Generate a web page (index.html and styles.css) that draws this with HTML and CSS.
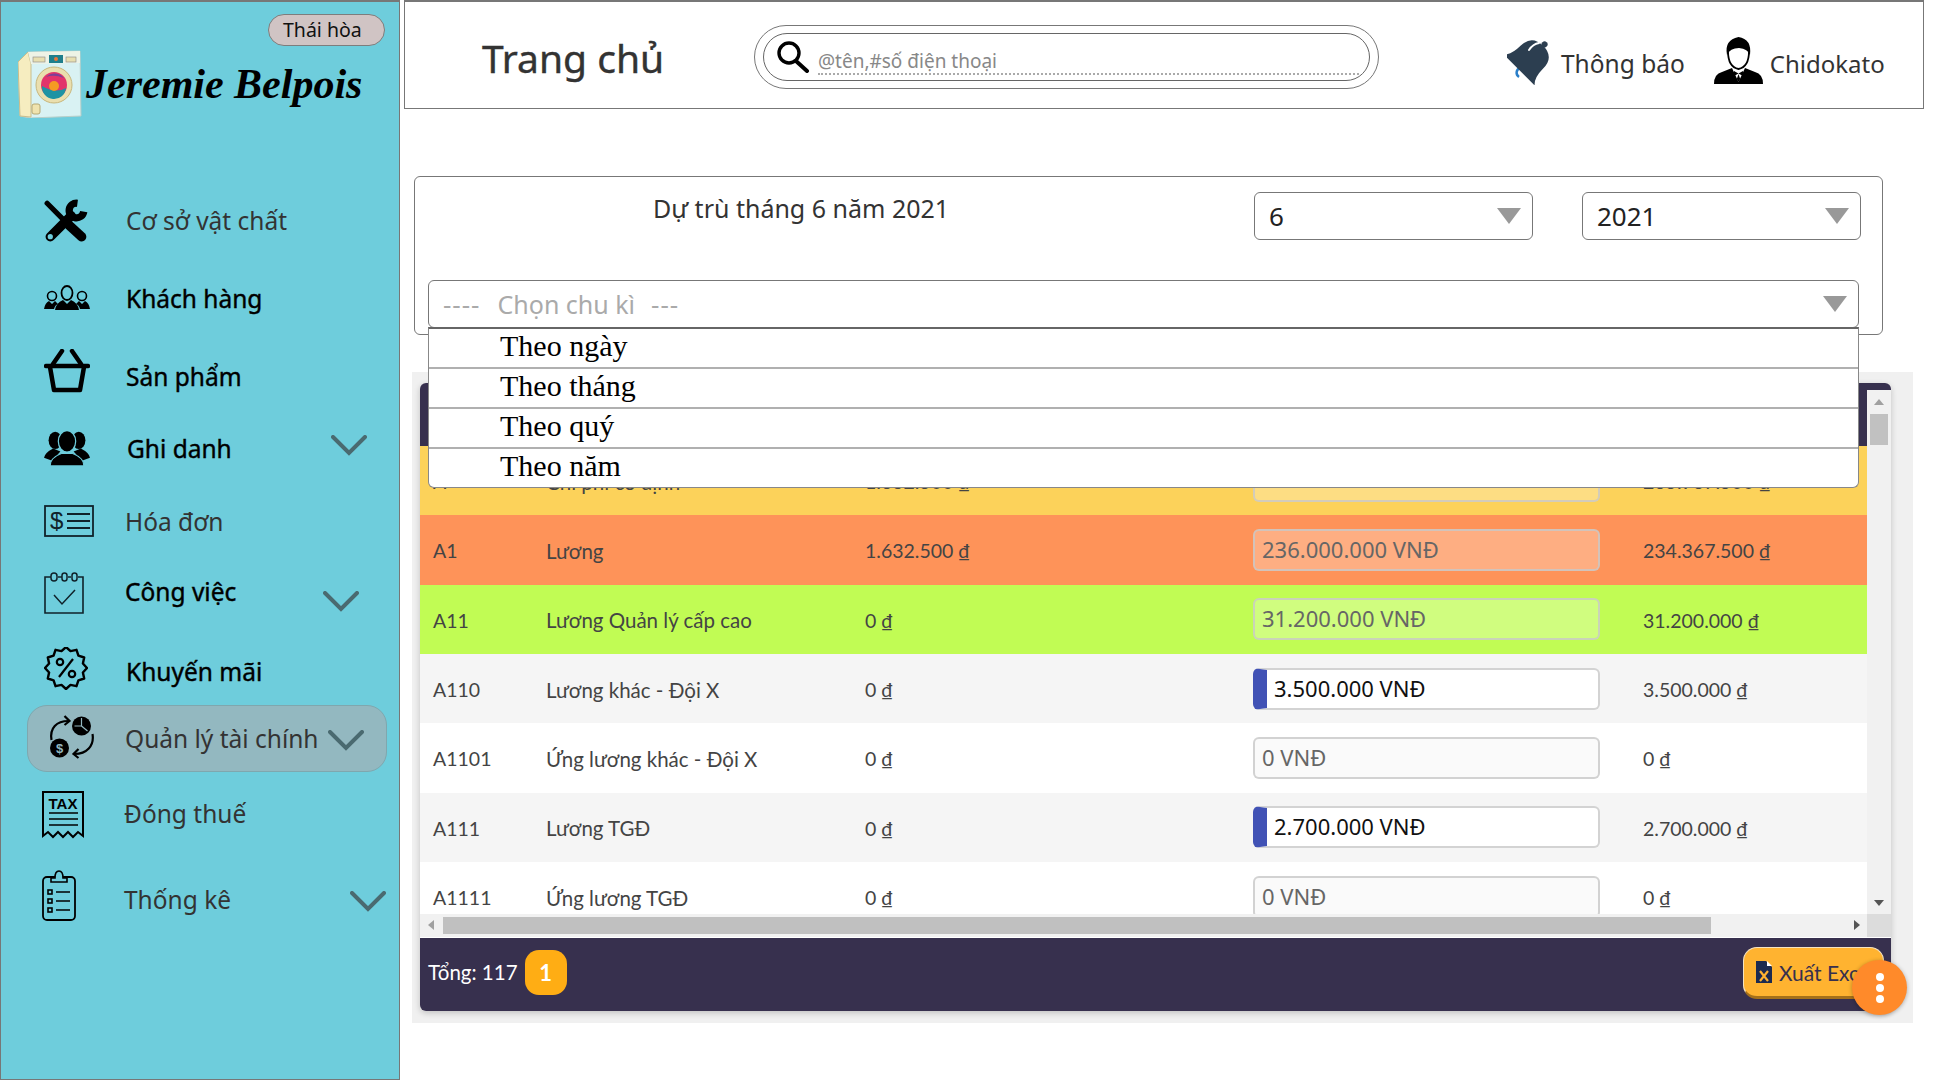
FILE: index.html
```html
<!DOCTYPE html>
<html lang="en">

<head>
    <meta charset="UTF-8">
    <meta name="viewport" content="width=device-width, initial-scale=1.0">
    <title>Trang chủ</title>
    <link rel="stylesheet" href="styles.css">
</head>

<body>
    <aside class="sidebar">
        <div class="branch-row">
            <span class="branch-pill">Thái hòa</span>
        </div>
        <div class="brand">
            <svg class="brand-logo" width="64" height="68" viewBox="0 0 64 68">
                <path d="M0 12 L10 2 L62 1 L63 66 L12 68 L2 66 Z" fill="#d9f2f3" stroke="#b9cfc9"/>
                <path d="M0 12 L10 2 L13 14 L13 67 L2 66 Z" fill="#f6edc0" stroke="#c9bd8c"/>
                <path d="M10 2 L62 1 L62 13 L13 14 Z" fill="#eef3e6"/>
                <rect x="15" y="7" width="12" height="5" fill="#e8dfb0" stroke="#888" stroke-width=".6"/>
                <rect x="31" y="5" width="14" height="8" fill="#1f7f8c"/>
                <circle cx="38" cy="9" r="2" fill="#e8773a"/>
                <rect x="48" y="7" width="10" height="5" fill="#e8dfb0" stroke="#888" stroke-width=".6"/>
                <circle cx="36" cy="35" r="18" fill="#eadfae" stroke="#c8b77d"/>
                <circle cx="36" cy="35" r="13" fill="#e2336b"/>
                <path d="M24 36 A12 12 0 0 0 48 38 Q38 44 24 36 Z" fill="#1d93a3"/>
                <path d="M28 27 A12 12 0 0 1 46 28 Q36 24 28 27 Z" fill="#7b3f98"/>
                <circle cx="36" cy="36" r="5" fill="#f59a23"/>
                <rect x="14" y="54" width="8" height="10" rx="2" fill="#efe3ae" stroke="#b6a873"/>
            </svg>
            <span class="brand-name">Jeremie Belpois</span>
        </div>
        <nav class="side-nav">
            <div class="nav-item">
                <span class="icon-box">
                    <svg width="46" height="46" viewBox="0 0 44 44">
                        <g fill="none" stroke="#000" stroke-linecap="round">
                            <path d="M3 6 L20 23" stroke-width="5"/>
                            <path d="M24 27 L36 38" stroke-width="9"/>
                            <path d="M6 38 L26 18" stroke-width="9"/>
                            <path d="M32 6 A7 7 0 1 0 38 14" stroke-width="7" stroke-linecap="butt"/>
                        </g>
                        <circle cx="6" cy="38" r="2.5" fill="#6ecddc"/>
                    </svg>
                </span>
                <span class="nav-label">Cơ sở vật chất</span>
            </div>
            <div class="nav-item">
                <span class="icon-box">
                    <svg width="46" height="26" viewBox="0 0 46 26">
                        <ellipse cx="23" cy="8" rx="5.5" ry="7" fill="none" stroke="#000" stroke-width="1.8"/>
                        <path d="M11 25 Q12 18 19 15 L23 19 L27 15 Q34 18 35 25 Z"/>
                        <circle cx="8" cy="11" r="4.5" fill="none" stroke="#000" stroke-width="1.6"/>
                        <circle cx="38" cy="11" r="4.5" fill="none" stroke="#000" stroke-width="1.6"/>
                        <path d="M0 24 Q1 18 5 16 L8 19 L11 16 L14 19 Q11 20 10 24 Z"/>
                        <path d="M46 24 Q45 18 41 16 L38 19 L35 16 L32 19 Q35 20 36 24 Z"/>
                    </svg>
                </span>
                <span class="nav-label bold">Khách hàng</span>
            </div>
            <div class="nav-item">
                <span class="icon-box">
                    <svg width="46" height="44" viewBox="0 0 46 44">
                        <g fill="none" stroke="#000" stroke-width="4.5" stroke-linecap="round" stroke-linejoin="round">
                            <path d="M9 15 L18 2"/>
                            <path d="M37 15 L28 2"/>
                            <path d="M2 17 L44 17"/>
                            <path d="M6 18 L10 41 H36 L40 18"/>
                        </g>
                    </svg>
                </span>
                <span class="nav-label bold">Sản phẩm</span>
            </div>
            <div class="nav-item">
                <span class="icon-box">
                    <svg width="46" height="35" viewBox="0 0 45 34">
                        <ellipse cx="11" cy="9" rx="6.5" ry="8.5"/>
                        <ellipse cx="34" cy="9" rx="6.5" ry="8.5"/>
                        <path d="M0 26 Q1 21 9 17 L16 20 L8 29 Z"/>
                        <path d="M45 26 Q44 21 36 17 L29 20 L37 29 Z"/>
                        <ellipse cx="22.5" cy="10" rx="8.5" ry="10.5" stroke="#6ecddc" stroke-width="1.2"/>
                        <path d="M6 34 Q6 26 17 22 L28 22 Q39 26 39 34 Z" stroke="#6ecddc" stroke-width="1"/>
                    </svg>
                </span>
                <span class="nav-label bold">Ghi danh</span>
                <svg class="chev" width="36" height="21" viewBox="0 0 36 21"><path d="M2 2 L18 18 L34 2"/></svg>
            </div>
            <div class="nav-item">
                <span class="icon-box">
                    <svg width="50" height="32" viewBox="0 0 50 32">
                        <rect x="1" y="1" width="48" height="30" fill="none" stroke="#10222a" stroke-width="1.8"/>
                        <text x="6" y="24" class="svg-dollar">$</text>
                        <path d="M23 9 H46 M23 16 H46 M23 23 H46" stroke="#10222a" stroke-width="1.8"/>
                    </svg>
                </span>
                <span class="nav-label">Hóa đơn</span>
            </div>
            <div class="nav-item">
                <span class="icon-box">
                    <svg width="40" height="42" viewBox="0 0 40 42">
                        <path d="M7 5 H1 V41 H39 V5 H34 M14 5 H18 M24 5 H27" fill="none" stroke="#10222a" stroke-width="1.6"/>
                        <g fill="none" stroke="#10222a" stroke-width="1.5">
                            <rect x="7" y="1" width="6" height="8" rx="3"/>
                            <rect x="18" y="1" width="5" height="8" rx="2.5"/>
                            <rect x="28" y="1" width="5" height="8" rx="2.5"/>
                            <path d="M10 23 L18 32 L31 18"/>
                        </g>
                    </svg>
                </span>
                <span class="nav-label bold">Công việc</span>
                <svg class="chev" width="36" height="21" viewBox="0 0 36 21"><path d="M2 2 L18 18 L34 2"/></svg>
            </div>
            <div class="nav-item">
                <span class="icon-box">
                    <svg width="44" height="43" viewBox="0 0 44 43">
                        <polygon points="43,21 38.9,25.5 40.2,31.5 34.4,33.4 32.5,39.2 26.5,37.9 22,42 17.5,37.9 11.5,39.2 9.6,33.4 3.8,31.5 5.1,25.5 1,21 5.1,16.5 3.8,10.5 9.6,8.6 11.5,2.8 17.5,4.1 22,0 26.5,4.1 32.5,2.8 34.4,8.6 40.2,10.5 38.9,16.5" fill="none" stroke="#000" stroke-width="2.4" stroke-linejoin="round"/>
                        <g fill="none" stroke="#000" stroke-width="2.2">
                            <circle cx="16" cy="15" r="3.2"/>
                            <circle cx="28" cy="27" r="3.2"/>
                            <path d="M29 12 L15 30"/>
                        </g>
                    </svg>
                </span>
                <span class="nav-label bold">Khuyến mãi</span>
            </div>
            <div class="nav-item active">
                <span class="icon-box">
                    <svg width="47" height="46" viewBox="0 0 46 46">
                        <g fill="none" stroke="#000" stroke-width="2.2">
                            <path d="M3 26 C1 14 8 7 20 7"/>
                            <path d="M16 2 L21 7 L16 11"/>
                            <path d="M44 20 C46 32 38 40 26 40"/>
                            <path d="M30 35 L25 40 L30 44"/>
                        </g>
                        <circle cx="33" cy="12" r="9.5"/>
                        <path d="M33 4 V12 H26 M33 12 L39 17" fill="none" stroke="#93b8c0" stroke-width="1.2"/>
                        <circle cx="11" cy="34" r="9.5"/>
                        <text x="11" y="38.5" class="svg-coin">$</text>
                    </svg>
                </span>
                <span class="nav-label">Quản lý tài chính</span>
                <svg class="chev" width="36" height="21" viewBox="0 0 36 21"><path d="M2 2 L18 18 L34 2"/></svg>
            </div>
            <div class="nav-item">
                <span class="icon-box">
                    <svg width="42" height="48" viewBox="0 0 42 48">
                        <path d="M1 1 H41 V45 L36 41 L31 46 L26 41 L21 46 L16 41 L11 46 L6 41 L1 45 Z" fill="none" stroke="#000" stroke-width="2"/>
                        <text x="21" y="18" class="svg-tax">TAX</text>
                        <path d="M7 22 H36 M7 28 H36 M7 34 H36" stroke="#000" stroke-width="1.6"/>
                    </svg>
                </span>
                <span class="nav-label">Đóng thuế</span>
            </div>
            <div class="nav-item">
                <span class="icon-box">
                    <svg width="34" height="51" viewBox="0 0 34 51">
                        <rect x="1" y="7" width="32" height="43" rx="4" fill="none" stroke="#000" stroke-width="1.8"/>
                        <path d="M9 12 V8 H13 Q13 1 17 1 Q21 1 21 8 H25 V12 Z" fill="#6ecddc" stroke="#000" stroke-width="1.6"/>
                        <g fill="none" stroke="#000" stroke-width="1.6">
                            <rect x="6" y="20" width="4" height="4"/>
                            <rect x="6" y="29" width="4" height="4"/>
                            <rect x="6" y="38" width="4" height="4"/>
                            <path d="M14 22 H28 M14 31 H28 M14 40 H28"/>
                        </g>
                    </svg>
                </span>
                <span class="nav-label">Thống kê</span>
                <svg class="chev" width="36" height="21" viewBox="0 0 36 21"><path d="M2 2 L18 18 L34 2"/></svg>
            </div>
        </nav>
    </aside>

    <main class="content">
        <header class="topbar">
            <h1 class="page-title">Trang chủ</h1>
            <div class="search-outer">
                <div class="search-inner">
                    <svg class="search-icon" width="34" height="32" viewBox="0 0 34 32">
                        <circle cx="13" cy="12" r="10" fill="none" stroke="#000" stroke-width="3.4"/>
                        <path d="M20 20 L31 30" stroke="#000" stroke-width="4" stroke-linecap="round"/>
                    </svg>
                    <span class="search-text">@tên,#số điện thoại</span>
                </div>
            </div>
            <div class="top-link notify">
                <svg width="46" height="50" viewBox="0 0 46 50">
                    <path d="M13 33 A5 5 0 0 0 12 42" fill="none" stroke="#2a7fc9" stroke-width="2.5"/>
                    <g transform="translate(22 25) rotate(45)" fill="#2c3e50">
                        <path d="M-22 14 Q-16 9 -16 -4 Q-16 -20 0 -20 Q16 -20 16 -4 Q16 9 22 14 Z"/>
                        <circle cx="0" cy="-22" r="3"/>
                    </g>
                    <path d="M22 15 Q26 9 32 8" fill="none" stroke="#fff" stroke-width="2" stroke-linecap="round"/>
                </svg>
                <span>Thông báo</span>
            </div>
            <div class="top-link user">
                <svg width="49" height="48" viewBox="0 0 49 48">
                    <path d="M0 48 Q0 38 8 36 L18 32 L24.5 46 L31 32 L41 36 Q49 38 49 48 Z"/>
                    <path d="M14 15 Q14 31 24.5 33 Q35 31 35 15" fill="#fff" stroke="#000" stroke-width="1.8"/>
                    <path d="M13 19 Q10 4 24.5 1 Q38 3 36 19 Q34 13 25 12 Q16 12 13 19 Z"/>
                    <path d="M20 35 L24.5 37.5 L29 35 V40 L24.5 37.5 L20 40 Z"/>
                    <path d="M24.5 38 L22.8 43 L24.5 46 L26.2 43 Z"/>
                </svg>
                <span>Chidokato</span>
            </div>
        </header>

        <section class="filter-card">
            <div class="filter-top">
                <div class="filter-title">Dự trù tháng 6 năm 2021</div>
                <div class="select select-small"><span>6</span><i class="arrow"></i></div>
                <div class="select select-small"><span>2021</span><i class="arrow"></i></div>
            </div>
            <div class="select select-wide">
                <span class="placeholder dash">----</span>
                <span class="placeholder choose">Chọn chu kì</span>
                <span class="placeholder dash">---</span>
                <i class="arrow"></i>
            </div>
            <ul class="period-menu">
                <li>Theo ngày</li>
                <li>Theo tháng</li>
                <li>Theo quý</li>
                <li>Theo năm</li>
            </ul>
        </section>

        <section class="table-panel">
            <div class="table-card">
                <div class="table-top">
                    <div class="table-view">
                        <div class="table-head"></div>
                        <table class="budget">
                            <tbody>
                                <tr class="row-yellow">
                                    <td>A</td>
                                    <td>Chi phí cố định</td>
                                    <td>1.632.500 ₫</td>
                                    <td><div class="amount off">267.600.000 VNĐ</div></td>
                                    <td>265.967.500 ₫</td>
                                </tr>
                                <tr class="row-orange">
                                    <td>A1</td>
                                    <td>Lương</td>
                                    <td>1.632.500 ₫</td>
                                    <td><div class="amount off">236.000.000 VNĐ</div></td>
                                    <td>234.367.500 ₫</td>
                                </tr>
                                <tr class="row-green">
                                    <td>A11</td>
                                    <td>Lương Quản lý cấp cao</td>
                                    <td>0 ₫</td>
                                    <td><div class="amount off">31.200.000 VNĐ</div></td>
                                    <td>31.200.000 ₫</td>
                                </tr>
                                <tr class="row-gray">
                                    <td>A110</td>
                                    <td>Lương khác - Đội X</td>
                                    <td>0 ₫</td>
                                    <td><div class="amount on">3.500.000 VNĐ</div></td>
                                    <td>3.500.000 ₫</td>
                                </tr>
                                <tr>
                                    <td>A1101</td>
                                    <td>Ứng lương khác - Đội X</td>
                                    <td>0 ₫</td>
                                    <td><div class="amount off">0 VNĐ</div></td>
                                    <td>0 ₫</td>
                                </tr>
                                <tr class="row-gray">
                                    <td>A111</td>
                                    <td>Lương TGĐ</td>
                                    <td>0 ₫</td>
                                    <td><div class="amount on">2.700.000 VNĐ</div></td>
                                    <td>2.700.000 ₫</td>
                                </tr>
                                <tr>
                                    <td>A1111</td>
                                    <td>Ứng lương TGĐ</td>
                                    <td>0 ₫</td>
                                    <td><div class="amount off">0 VNĐ</div></td>
                                    <td>0 ₫</td>
                                </tr>
                            </tbody>
                        </table>
                    </div>
                    <div class="vscroll">
                        <div class="vscroll-cap"></div>
                        <i class="tri-up"></i>
                        <div class="vscroll-thumb"></div>
                        <i class="tri-down"></i>
                    </div>
                </div>
                <div class="hscroll">
                    <div class="hscroll-track">
                        <i class="tri-left"></i>
                        <div class="hscroll-thumb"></div>
                        <i class="tri-right"></i>
                    </div>
                    <div class="hscroll-corner"></div>
                </div>
                <div class="table-foot">
                    <span class="total">Tổng: 117</span>
                    <span class="page-badge">1</span>
                    <button class="export-btn">
                        <svg width="16" height="22" viewBox="0 0 16 22">
                            <path d="M0 0 H10 L16 6 V22 H0 Z" fill="#1d2b50"/>
                            <path d="M11 0 L16 5 H11 Z" fill="#fff"/>
                            <path d="M4 10 L12 20 M12 10 L4 20" stroke="#ffb330" stroke-width="2.2"/>
                        </svg>
                        Xuất Excel
                    </button>
                </div>
            </div>
            <div class="fab"><i></i><i></i><i></i></div>
        </section>
    </main>
</body>

</html>
```

FILE: styles.css
```css
* {
    box-sizing: border-box;
}

html, body {
    margin: 0;
    height: 1080px;
    overflow: hidden;
}

body {
    display: flex;
    font-family: "Noto Sans", "DejaVu Sans", sans-serif;
    background-color: #fff;
    color: #333;
}

/* sidebar */
.sidebar {
    width: 400px;
    height: 1080px;
    flex: none;
    background-color: #6ecddc;
    border: 1px solid #777;
    border-top: 2px solid #777;
}

.branch-row {
    display: flex;
    justify-content: flex-end;
    padding: 12px 14px 0 0;
}

.branch-pill {
    width: 117px;
    height: 32px;
    border: 1px solid #7d7d7d;
    border-radius: 16px;
    background-color: #d0c4c4;
    color: #111;
    font-size: 19.5px;
    line-height: 30px;
    padding-left: 14px;
}

.brand {
    display: flex;
    align-items: center;
    padding: 4px 0 0 17px;
    height: 72px;
}

.brand-name {
    margin-left: 4px;
    font-family: "Liberation Serif", serif;
    font-style: italic;
    font-weight: bold;
    font-size: 42px;
    color: #000;
    white-space: nowrap;
}

.side-nav {
    display: flex;
    flex-direction: column;
    padding-top: 72px;
}

.nav-item {
    display: flex;
    align-items: center;
    height: 60px;
    margin-left: 26px;
    margin-right: 12px;
}

.nav-item:nth-child(2), .nav-item:nth-child(3) {
    margin-top: 18px;
}

.nav-item:nth-child(4) {
    margin-top: 12px;
}

.nav-item:nth-child(5) {
    margin-top: 13px;
}

.nav-item:nth-child(6) {
    margin-top: 10px;
}

.nav-item:nth-child(7) {
    margin-top: 20px;
}

.nav-item:nth-child(8) {
    margin-top: 4px;
}

.nav-item:nth-child(9) {
    margin-top: 11px;
}

.nav-item:nth-child(10) {
    margin-top: 26px;
}

.nav-item.active {
    height: 67px;
    background-color: #93b8c0;
    border: 1px solid #7fa7ae;
    border-radius: 20px;
}

/* the label column starts a little differently on each row */
.icon-box {
    display: flex;
    align-items: center;
    flex: none;
    width: 99px;
    padding-left: 17px;
}

.nav-item:nth-child(4) .icon-box {
    width: 100px;
}

.nav-item:nth-child(5) .icon-box, .nav-item:nth-child(6) .icon-box {
    width: 98px;
}

.nav-item:nth-child(8) .icon-box {
    width: 97px;
    padding-left: 20px;
}

.nav-item:nth-child(9) .icon-box {
    width: 97px;
    padding-left: 15px;
}

.nav-item:nth-child(10) .icon-box {
    width: 97px;
    padding-left: 15px;
}

.nav-item:nth-child(3) .icon-box svg {
    margin-top: -10px;
}

.nav-item:nth-child(6) .icon-box svg {
    margin-top: 4px;
}

.nav-item:nth-child(7) .icon-box svg {
    margin-top: -6px;
}

.nav-item:nth-child(8) .icon-box svg {
    margin-top: -4px;
}

.nav-item:nth-child(9) .icon-box svg {
    margin-top: 4px;
}

.nav-item:nth-child(10) .icon-box svg {
    margin-top: -8px;
}

.nav-label {
    font-size: 24.5px;
    color: #333;
    white-space: nowrap;
}

.nav-label.bold {
    color: #000;
    -webkit-text-stroke: .4px #000;
}

.chev {
    flex: none;
    margin-left: auto;
    margin-right: 20px;
}

.nav-item:nth-child(4) .chev {
    margin-top: -6px;
}

.nav-item:nth-child(6) .chev {
    margin-top: 20px;
    margin-right: 28px;
}

.nav-item:nth-child(8) .chev {
    margin-top: 4px;
    margin-right: 22px;
}

.nav-item:nth-child(10) .chev {
    margin-top: 5px;
    margin-right: 1px;
}

.chev path {
    fill: none;
    stroke: #4a6a70;
    stroke-width: 4;
    stroke-linecap: round;
}

.svg-dollar {
    font-family: "Liberation Sans", sans-serif;
    font-size: 24px;
    fill: #10222a;
}

.svg-coin {
    font-family: "Liberation Sans", sans-serif;
    font-size: 13px;
    font-weight: bold;
    fill: #93b8c0;
    text-anchor: middle;
}

.svg-tax {
    font-family: "Liberation Sans", sans-serif;
    font-size: 15px;
    font-weight: bold;
    text-anchor: middle;
}

/* top bar */
.content {
    width: 1534px;
    padding-left: 4px;
}

.topbar {
    width: 1520px;
    height: 109px;
    display: flex;
    align-items: center;
    border: 1px solid #777;
    border-top-width: 2px;
}

.page-title {
    width: 349px;
    margin: 5px 0 0;
    padding-left: 77px;
    font-size: 39px;
    font-weight: normal;
    color: #333;
    -webkit-text-stroke: .4px #333;
    white-space: nowrap;
}

.search-outer {
    width: 625px;
    height: 64px;
    padding: 7px 8px;
    margin-top: 4px;
    border: 1px solid #777;
    border-radius: 32px;
}

.search-inner {
    height: 48px;
    display: flex;
    align-items: center;
    padding-left: 12px;
    border: 1px solid #666;
    border-radius: 24px;
}

.search-text {
    flex: 1;
    margin: 10px 10px 0 8px;
    font-size: 19px;
    color: #888;
    border-bottom: 2px dotted #aaa;
    line-height: 24px;
}

.top-link {
    display: flex;
    align-items: center;
    gap: 8px;
    font-size: 24.5px;
    color: #333;
    margin-top: 16px;
}

.top-link svg {
    margin-top: -6px;
}

.notify {
    margin-left: 128px;
}

.user {
    margin-left: 29px;
    gap: 7px;
    font-size: 24px;
}

/* filter */
.filter-card {
    position: relative;
    width: 1469px;
    height: 159px;
    margin: 67px 0 0 10px;
    border: 1px solid #777;
    border-radius: 6px;
}

.filter-top {
    display: flex;
    padding: 15px 21px 0 238px;
    height: 103px;
}

.filter-title {
    width: 601px;
    padding-top: 1px;
    font-size: 25px;
    line-height: 30px;
    color: #333;
}

.select {
    display: flex;
    align-items: center;
    height: 48px;
    border: 1px solid #777;
    border-radius: 6px;
    background-color: #fff;
    font-size: 26px;
    padding-left: 14px;
    color: #222;
}

.select-small {
    width: 279px;
    margin-right: 49px;
}

.select-small:last-child {
    margin-right: 0;
}

.select-wide {
    width: 1431px;
    margin-left: 13px;
}

.placeholder {
    color: #aaa;
}

.choose {
    margin: 0 16px 0 17px;
    font-size: 25px;
}

.dash {
    letter-spacing: 1px;
}

.arrow {
    margin-left: auto;
    margin-right: 11px;
    border-left: 12px solid transparent;
    border-right: 12px solid transparent;
    border-top: 16px solid #999;
}

.period-menu {
    position: absolute;
    left: 13px;
    top: 150px;
    z-index: 5;
    width: 1431px;
    height: 161px;
    margin: 0;
    padding: 0;
    list-style: none;
    background-color: #fff;
    border: 1px solid #888;
    border-top: 2px solid #666;
    border-radius: 0 0 6px 6px;
    font-family: "Liberation Serif", serif;
    font-size: 30px;
    color: #000;
}

.period-menu li {
    height: 40px;
    line-height: 34px;
    padding-left: 71px;
    border-bottom: 2px solid #b0b0b0;
}

.period-menu li:last-child {
    border-bottom: none;
}

/* table */
.table-panel {
    position: relative;
    width: 1501px;
    height: 651px;
    margin: 37px 0 0 8px;
    padding: 11px 22px 12px 8px;
    background-color: #f0f0f0;
}

.table-card {
    height: 628px;
    display: flex;
    flex-direction: column;
    border-radius: 6px;
    overflow: hidden;
    background-color: #fff;
    box-shadow: 0 2px 6px rgba(0, 0, 0, 0.2);
}

.table-top {
    display: flex;
    height: 531px;
}

.table-view {
    width: 1447px;
    overflow: hidden;
}

.table-head {
    height: 63px;
    background-color: #37304e;
}

.budget {
    width: 1447px;
    table-layout: fixed;
    border-collapse: collapse;
    font-family: "Lato", sans-serif;
    font-size: 19.5px;
    color: #444;
}

.budget td {
    height: 69.33px;
    padding: 2px 0 0 13px;
    white-space: nowrap;
}

.budget td:nth-child(1) {
    width: 113px;
}

.budget td:nth-child(2) {
    width: 319px;
    font-size: 20.5px;
}

.budget td:nth-child(3) {
    width: 388px;
}

.budget td:nth-child(4) {
    width: 390px;
    padding-top: 0;
}

.row-yellow {
    background-color: #fcd25a;
}

.row-orange {
    background-color: #fe9359;
}

.row-green {
    background-color: #c1fc54;
}

.row-gray {
    background-color: #f5f5f5;
}

.amount {
    width: 347px;
    height: 42px;
    line-height: 37px;
    font-family: "Noto Sans", sans-serif;
    font-size: 22px;
    border: 2px solid rgba(200, 200, 200, 0.8);
    border-radius: 6px;
    padding-left: 7px;
}

.row-yellow .amount {
    line-height: 31px;
}

.amount.off {
    background-color: rgba(255, 255, 255, 0.25);
    color: #666;
}

tr:not([class]) .amount.off {
    background-color: #fafafa;
}

.amount.on {
    background-color: #fff;
    color: #111;
    border-left: 14px solid #4152b5;
}

.vscroll {
    position: relative;
    width: 24px;
    background-color: #f1f1f1;
}

.vscroll-cap {
    height: 7px;
    background-color: #37304e;
}

.vscroll-thumb {
    width: 18px;
    height: 31px;
    margin: 24px 0 0 3px;
    background-color: #c1c1c1;
}

.tri-up, .tri-down {
    position: absolute;
    left: 7px;
    border-left: 5px solid transparent;
    border-right: 5px solid transparent;
}

.tri-up {
    top: 16px;
    border-bottom: 6px solid #a0a0a0;
}

.tri-down {
    bottom: 8px;
    border-top: 6px solid #555;
}

.hscroll {
    display: flex;
    height: 23px;
}

.hscroll-track {
    position: relative;
    flex: 1;
    padding: 3px 0 0 23px;
    background-color: #f1f1f1;
}

.hscroll-thumb {
    width: 1268px;
    height: 17px;
    background-color: #c0c0c0;
}

.tri-left, .tri-right {
    position: absolute;
    top: 6px;
    border-top: 5px solid transparent;
    border-bottom: 5px solid transparent;
}

.tri-left {
    left: 8px;
    border-right: 6px solid #a0a0a0;
}

.tri-right {
    right: 7px;
    border-left: 6px solid #555;
}

.hscroll-corner {
    width: 24px;
    background-color: #dcdcdc;
}

.table-foot {
    display: flex;
    align-items: center;
    flex: 1;
    margin-top: 1px;
    padding: 0 7px 0 8px;
    background-color: #37304e;
    color: #fff;
}

.total {
    margin-top: -5px;
    font-family: "Lato", sans-serif;
    font-size: 20.5px;
}

.page-badge {
    width: 42px;
    height: 45px;
    margin: -4px 0 0 7px;
    border-radius: 14px;
    background-color: #ffad14;
    color: #fff;
    font-family: "Lato", sans-serif;
    font-weight: bold;
    font-size: 22px;
    line-height: 45px;
    text-align: center;
}

.export-btn {
    display: flex;
    align-items: center;
    gap: 7px;
    width: 141px;
    height: 52px;
    margin: -3px 0 0 auto;
    padding: 0 0 0 12px;
    overflow: hidden;
    white-space: nowrap;
    border: 1px solid #f4e3c0;
    border-bottom: 3px solid #a5701a;
    border-radius: 14px;
    background-color: #ffb330;
    color: #37304e;
    font-family: "Lato", sans-serif;
    font-size: 21px;
}

.fab {
    position: absolute;
    left: 1440px;
    top: 588px;
    display: flex;
    flex-direction: column;
    align-items: center;
    justify-content: center;
    gap: 3px;
    width: 55px;
    height: 55px;
    border-radius: 50%;
    background-color: #ff8a2a;
    box-shadow: 0 1px 4px rgba(0, 0, 0, 0.3);
}

.fab i {
    width: 8px;
    height: 8px;
    border-radius: 50%;
    background-color: #fff;
}
```
